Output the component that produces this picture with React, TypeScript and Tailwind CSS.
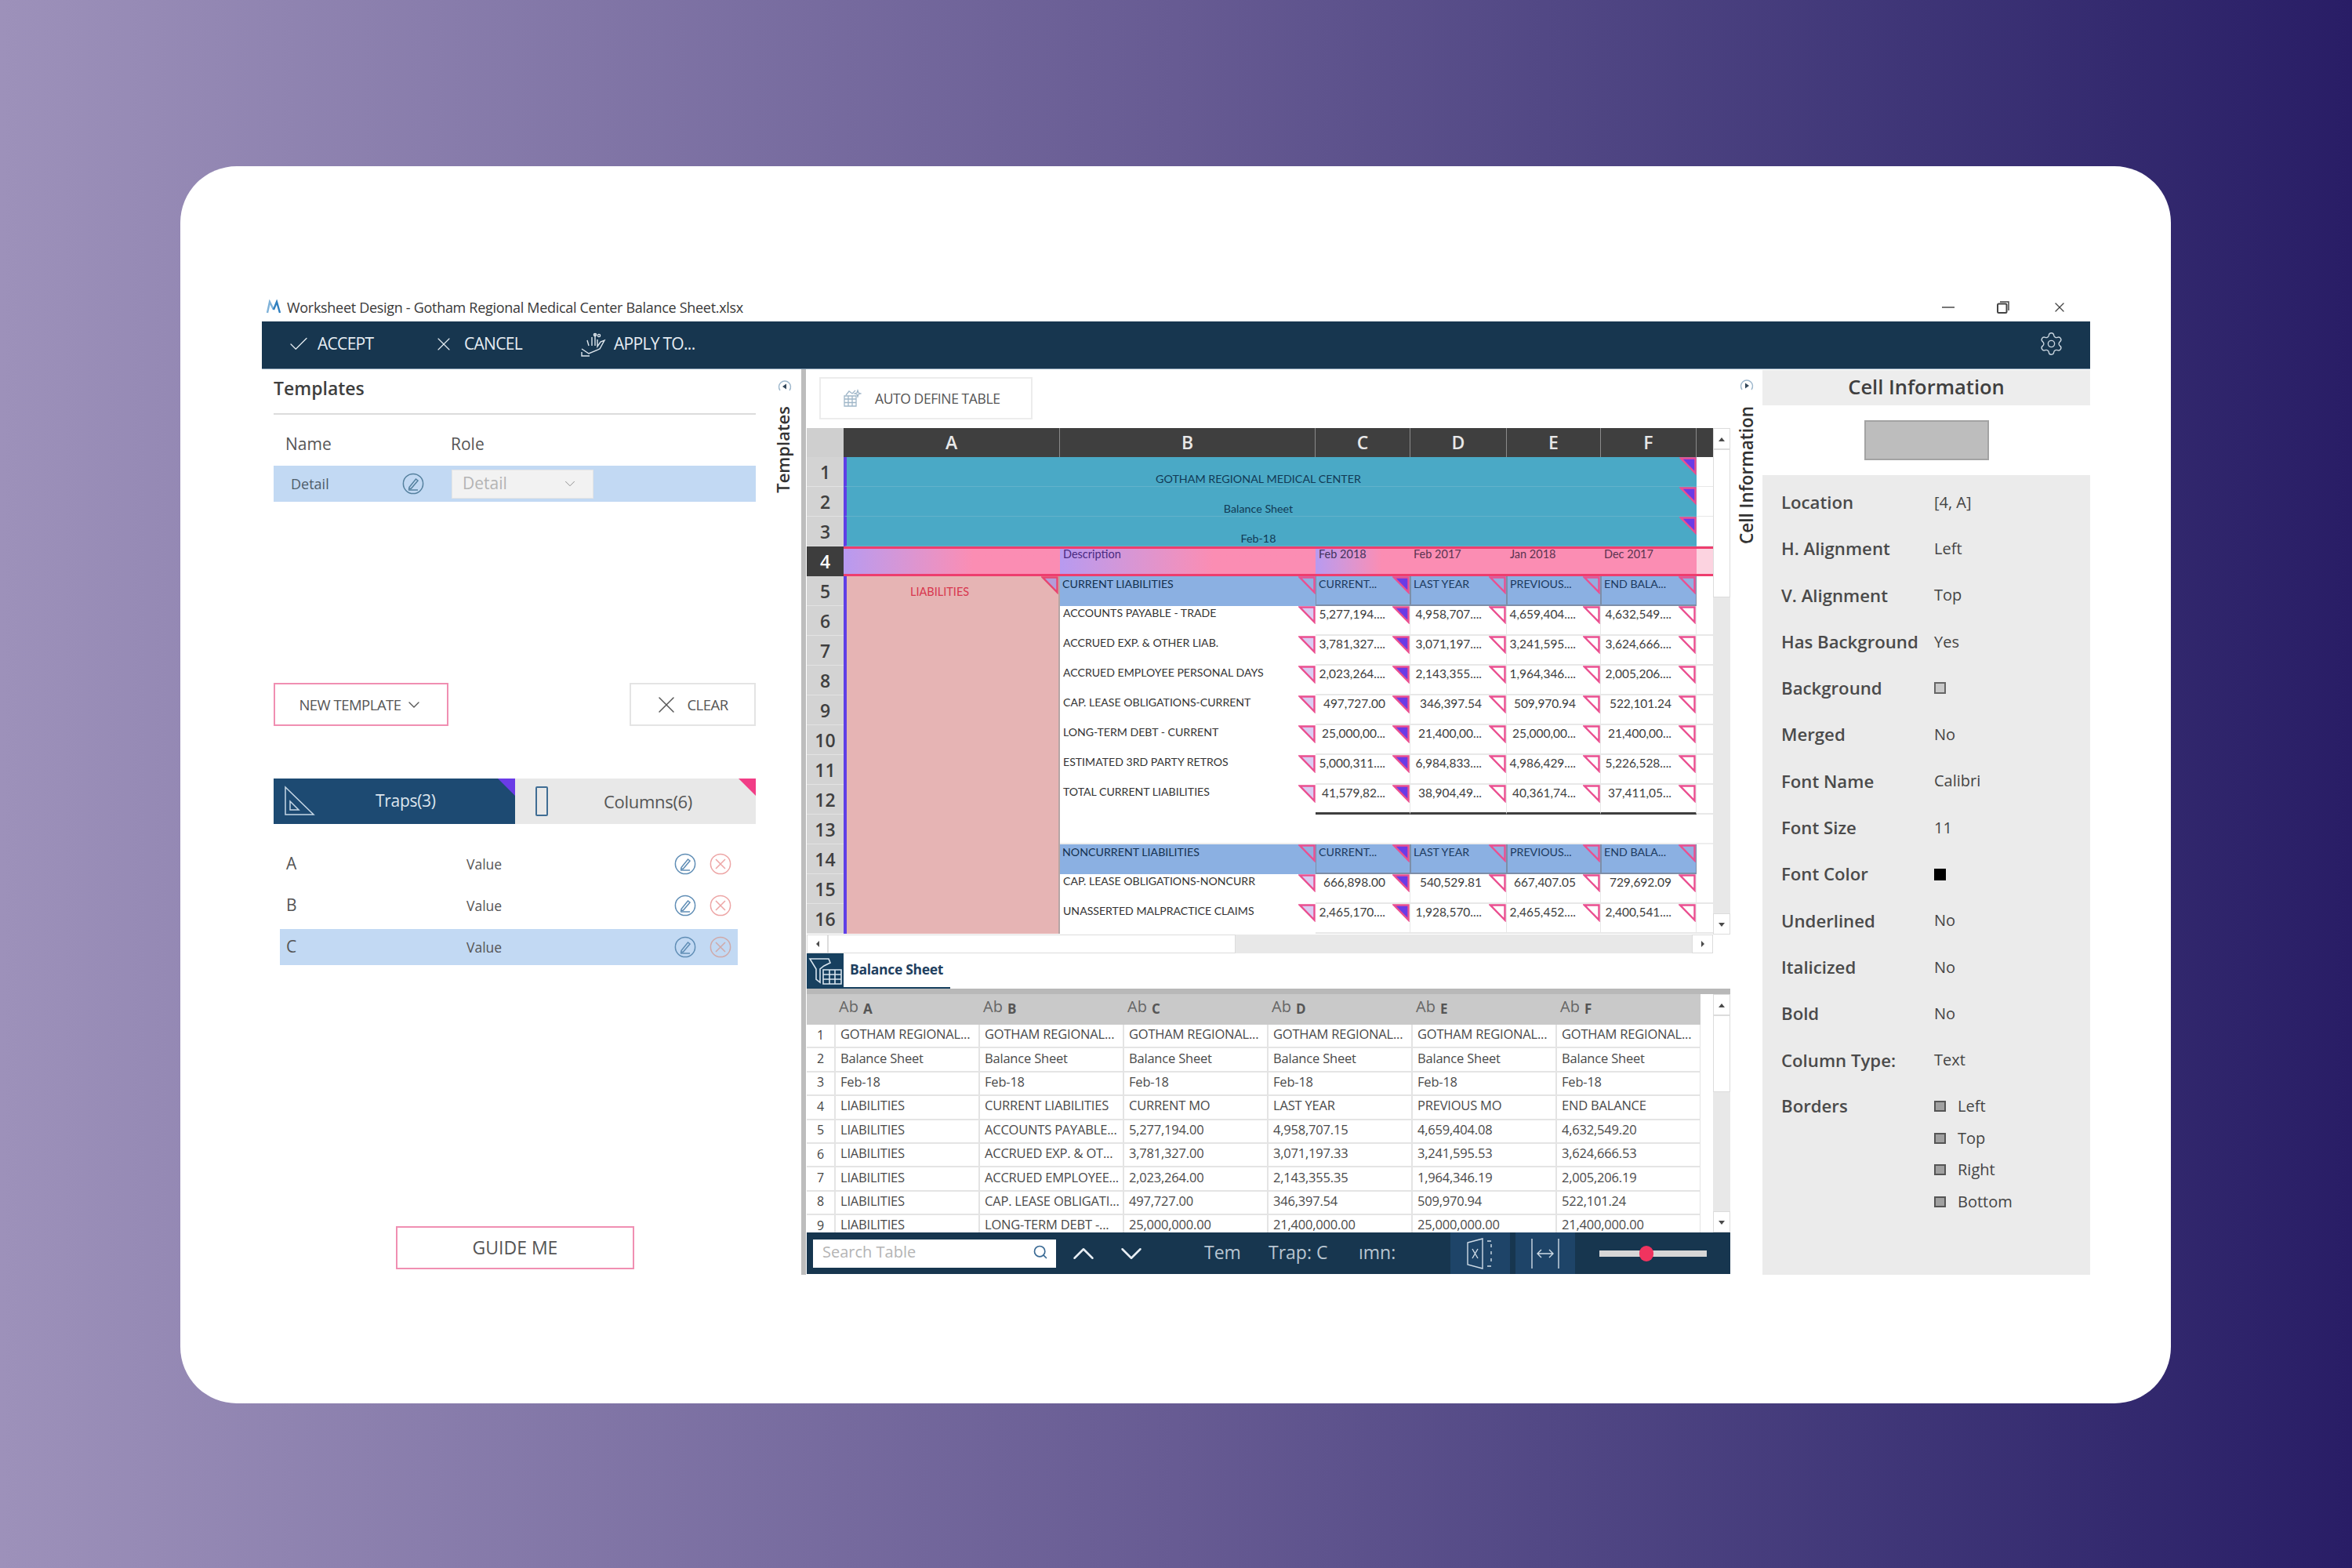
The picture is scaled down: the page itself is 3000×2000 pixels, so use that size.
import React from "react";
import { Settings, Search, ChevronUp, ChevronDown, Check, X } from "lucide-react";

const OPEN = "font-['Open_Sans',sans-serif]";

function Tri({ fill, stroke = "#ea4f90" }: { fill: string; stroke?: string }) {
  return (
    <svg width="22" height="23" viewBox="0 0 22 23" className="absolute top-0 right-0">
      <polygon points="2,1.5 20.5,1.5 20.5,20.5" fill={fill} stroke={stroke} strokeWidth="2.4" />
    </svg>
  );
}

function PencilCircle({ color = "#5f8db5" }: { color?: string }) {
  return (
    <svg width="28" height="28" viewBox="0 0 28 28" fill="none" stroke={color} strokeWidth="1.5">
      <circle cx="14" cy="14" r="12.6" />
      <path d="M9 18.5 L17.5 8 L20 10 L11.5 20 L8.6 20.8 Z" />
      <path d="M8 22 H20" />
    </svg>
  );
}

function XCircle({ color = "#eda5a5" }: { color?: string }) {
  return (
    <svg width="28" height="28" viewBox="0 0 28 28" fill="none" stroke={color} strokeWidth="1.5">
      <circle cx="14" cy="14" r="12.6" />
      <path d="M8 8 L20 20 M20 8 L8 20" />
    </svg>
  );
}

function CollapseIcon({ dir }: { dir: "left" | "right" }) {
  return (
    <svg width="18" height="18" viewBox="0 0 18 18" fill="none">
      <path d="M3 14 A 7.5 7.5 0 1 1 15 14" stroke="#9db7cc" strokeWidth="1.4" />
      <path d={dir === "left" ? "M11 5.5 V12.5 L6 9 Z" : "M7 5.5 V12.5 L12 9 Z"} fill="#33475a" />
    </svg>
  );
}

function HandIcon() {
  return (
    <svg width="36" height="36" viewBox="0 0 36 36" fill="none" stroke="#dfe7ee" strokeWidth="1.4">
      <path d="M4 24 L13 30 L27 24 L33 13 L28 15 L24 21 L24 12 M21 20 V5 M17 20 V9 M13 20 L11 13 M4 28 V33 H14" />
      <circle cx="21" cy="6" r="1.6" />
      <circle cx="26" cy="7" r="1.6" />
    </svg>
  );
}

function TrapIcon() {
  return (
    <svg width="42" height="42" viewBox="0 0 42 42" fill="none" stroke="#c6d7e6" strokeWidth="1.5">
      <path d="M3 3 V38 H39 Z" />
      <path d="M9 21 V32 H20 Z" />
    </svg>
  );
}

function FilterTableIcon() {
  return (
    <svg width="44" height="40" viewBox="0 0 44 40" fill="none" stroke="#d8e4ee" strokeWidth="1.6">
      <path d="M2 4 H26 L28 9 L20 13 L15 17 V34 L10 30 V17 Z" />
      <path d="M19 18 H42 V36 H19 Z M19 24 H42 M19 30 H42 M27 18 V36 M34 18 V36" />
    </svg>
  );
}

function AutoIcon() {
  return (
    <svg width="24" height="24" viewBox="0 0 24 24" fill="none" stroke="#9fb6c8" strokeWidth="1.3">
      <path d="M2 9 H17 V22 H2 Z M2 13 H17 M2 17.5 H17 M7 9 V22 M12 9 V22" />
      <path d="M4 8 L8 3 L12 6 L16 2" />
      <path d="M19 2 L20 5 L23 6 L20 7 L19 10 L18 7 L15 6 L18 5 Z" />
    </svg>
  );
}

function ExcelIcon() {
  return (
    <svg width="38" height="42" viewBox="0 0 38 42" fill="none" stroke="#cfdbe6" strokeWidth="1.4">
      <path d="M3 7 L22 2 V40 L3 35 Z" />
      <path d="M9 15 L16 27 M16 15 L9 27" />
      <path d="M28 5 H33 M33 9 V13 M33 18 V22 M33 27 V31 M28 37 H33" />
    </svg>
  );
}

function FitIcon() {
  return (
    <svg width="38" height="42" viewBox="0 0 38 42" fill="none" stroke="#cfdbe6" strokeWidth="1.4">
      <path d="M2 2 V40 M36 2 V40" />
      <path d="M9 21 H29 M14 16 L9 21 L14 26 M24 16 L29 21 L24 26" />
    </svg>
  );
}

function Logo() {
  return (
    <svg width="22" height="20" viewBox="0 0 22 20" fill="none" strokeWidth="2.4">
      <path d="M3 17 L6 3 L11 13" stroke="#7fb2d9" />
      <path d="M11 13 L15 3 L19 17" stroke="#2f7fbf" />
    </svg>
  );
}

function Restore() {
  return (
    <svg width="16" height="16" viewBox="0 0 16 16" fill="none" stroke="#444" strokeWidth="2">
      <rect x="1" y="3.5" width="11.5" height="11.5" rx="1.5" />
      <path d="M4 1 H15 V12" strokeWidth="1.5" />
    </svg>
  );
}

function Arrow({ dir }: { dir: "up" | "down" | "left" | "right" }) {
  const d = {
    up: "M2 9 L6 4 L10 9 Z",
    down: "M2 4 L6 9 L10 4 Z",
    left: "M8 2 L4 6 L8 10 Z",
    right: "M4 2 L8 6 L4 10 Z",
  }[dir];
  return (
    <svg width="12" height="12" viewBox="0 0 12 12">
      <path d={d} fill="#4a4a4a" />
    </svg>
  );
}

const W = ["w-[276px]", "w-[326px]", "w-[121px]", "w-[123px]", "w-[120px]", "w-[122px]"];
const LETTERS = ["A", "B", "C", "D", "E", "F"];
const BLUEHEAD = ["CURRENT...", "LAST YEAR", "PREVIOUS...", "END BALA..."];

const DATA: [number, string, string[]][] = [
  [6, "ACCOUNTS PAYABLE - TRADE", ["5,277,194....", "4,958,707....", "4,659,404....", "4,632,549...."]],
  [7, "ACCRUED EXP. & OTHER LIAB.", ["3,781,327....", "3,071,197....", "3,241,595....", "3,624,666...."]],
  [8, "ACCRUED EMPLOYEE PERSONAL DAYS", ["2,023,264....", "2,143,355....", "1,964,346....", "2,005,206...."]],
  [9, "CAP. LEASE OBLIGATIONS-CURRENT", ["497,727.00", "346,397.54", "509,970.94", "522,101.24"]],
  [10, "LONG-TERM DEBT - CURRENT", ["25,000,00...", "21,400,00...", "25,000,00...", "21,400,00..."]],
  [11, "ESTIMATED 3RD PARTY RETROS", ["5,000,311....", "6,984,833....", "4,986,429....", "5,226,528...."]],
  [12, "TOTAL CURRENT LIABILITIES", ["41,579,82...", "38,904,49...", "40,361,74...", "37,411,05..."]],
];
const DATA2: [number, string, string[]][] = [
  [15, "CAP. LEASE OBLIGATIONS-NONCURR", ["666,898.00", "540,529.81", "667,407.05", "729,692.09"]],
  [16, "UNASSERTED MALPRACTICE CLAIMS", ["2,465,170....", "1,928,570....", "2,465,452....", "2,400,541...."]],
];

function RowNum({ n, active }: { n: number; active?: boolean }) {
  return (
    <div
      className={
        "w-[47px] h-full shrink-0 flex items-center justify-center text-[23px] " +
        OPEN +
        (active
          ? " bg-[#3d3d3d] text-white font-semibold"
          : " bg-[#d3d3d3] text-[#3f3f3f] font-semibold pt-[2px] border-b border-[#e2e2e2]")
      }
    >
      {n}
    </div>
  );
}

function PinkA({ first }: { first?: boolean }) {
  return (
    <div className="relative w-[276px] h-full shrink-0 bg-[#e6b4b4] border-l-[4px] border-[#5f3fe6] border-r-2 border-r-[#b5a5a5]">
      {first && (
        <>
          <div className="absolute left-[81px] top-[10px] text-[14.5px] leading-[20px] text-[#d8374f]">LIABILITIES</div>
          <Tri fill="#b49cd8" stroke="#e8456f" />
        </>
      )}
    </div>
  );
}

function DataRow({ n, label, vals, thick }: { n: number; label: string; vals: string[]; thick?: boolean }) {
  return (
    <div className="flex h-[38px]">
      <RowNum n={n} />
      <PinkA />
      <div className="relative w-[326px] h-full shrink-0 pl-[4px] text-[14.1px] leading-[18px] text-[#333] whitespace-nowrap">
        {label}
        <Tri fill="#d9ccf2" />
      </div>
      {vals.map((v, i) => (
        <div
          key={i}
          className={
            "relative h-full shrink-0 text-right pr-[31px] text-[15.5px] leading-[20px] text-[#3d3d3d] whitespace-nowrap border-r border-[#e8e8e8] " +
            W[i + 2] +
            (thick ? " border-b-[3px] border-b-[#3f3f3f]" : " border-b-2 border-b-[#e8e8e8]")
          }
        >
          {v}
          <Tri fill={i === 0 ? "#6a3be6" : "#ffffff"} />
        </div>
      ))}
      <div className="w-[21px] h-full shrink-0 border-b-2 border-[#e8e8e8]" />
    </div>
  );
}

function BlueRow({ n, first, label }: { n: number; first?: boolean; label: string }) {
  return (
    <div className="flex h-[38px]">
      <RowNum n={n} />
      <PinkA first={first} />
      <div className="relative w-[326px] h-full shrink-0 bg-[#8bb0e2] pl-[3px] text-[14.2px] leading-[20px] text-[#14304f] whitespace-nowrap">
        {label}
        <Tri fill="#93aee0" />
      </div>
      {BLUEHEAD.map((v, i) => (
        <div
          key={v}
          className={"relative h-full shrink-0 bg-[#8bb0e2] border-l border-r border-b-2 border-[#7d8ea8] pl-[3px] text-[14.2px] leading-[20px] text-[#1c3a5e] whitespace-nowrap " + W[i + 2]}
        >
          {v}
          <Tri fill={i === 0 ? "#6a3be6" : "#93aee0"} />
        </div>
      ))}
      <div className="w-[21px] h-full shrink-0" />
    </div>
  );
}

function TealRow({ n, text }: { n: number; text: string }) {
  return (
    <div className="flex h-[38px]">
      <RowNum n={n} />
      <div className="relative w-[1088px] h-full shrink-0 bg-[#4aa9c6] border-l-[4px] border-[#5f3fe6] border-b border-b-[#62b2cb] flex items-end justify-center pr-[34px] text-[14.3px] leading-[18px] text-[#123a55]">
        {text}
        <Tri fill="#6a3be6" />
      </div>
      <div className="w-[21px] h-full shrink-0 border-b border-[#e8e8e8]" />
    </div>
  );
}

function Sheet() {
  return (
    <div className={"w-[1156px] shrink-0 font-['Lato',sans-serif]"}>
      <div className="flex h-[37px]">
        <div className="w-[47px] bg-[#cfcfcf] shrink-0" />
        {LETTERS.map((l, i) => (
          <div key={l} className={"h-full shrink-0 bg-[#3f3f3f] border-r border-[#8a8a8a] flex items-center justify-center text-[23px] font-semibold text-[#e8e8e8] " + OPEN + " " + W[i]}>
            {l}
          </div>
        ))}
        <div className="w-[21px] bg-[#3f3f3f] shrink-0" />
      </div>
      <TealRow n={1} text="GOTHAM REGIONAL MEDICAL CENTER" />
      <TealRow n={2} text="Balance Sheet" />
      <TealRow n={3} text="Feb-18" />
      <div className="flex h-[38px]">
        <RowNum n={4} active />
        <div className="w-[1109px] shrink-0 flex border-y-[3px] border-[#ee3d6e]">
          <div className="w-[276px] bg-linear-to-r from-[#b79af0] to-[#fb8db3] to-60%" />
          <div className="w-[326px] bg-linear-to-r from-[#b79af0] to-[#fb8db3] to-60% pl-[4px] text-[14.5px] leading-[14px] text-[#4a2a80]">Description</div>
          <div className="w-[121px] bg-linear-to-r from-[#b79af0] to-[#fb8db3] to-70% pl-[4px] text-[14.5px] leading-[14px] text-[#43335c]">Feb 2018</div>
          <div className="w-[123px] bg-[#fb8db3] pl-[4px] text-[14.5px] leading-[14px] text-[#5a3350]">Feb 2017</div>
          <div className="w-[120px] bg-[#fb8db3] pl-[4px] text-[14.5px] leading-[14px] text-[#5a3350]">Jan 2018</div>
          <div className="w-[122px] bg-[#fb8db3] pl-[4px] text-[14.5px] leading-[14px] text-[#5a3350]">Dec 2017</div>
          <div className="w-[21px] bg-[#fcd3e0]" />
        </div>
      </div>
      <BlueRow n={5} first label="CURRENT LIABILITIES" />
      {DATA.map(([n, l, v]) => (
        <DataRow key={n} n={n} label={l} vals={v} thick={n === 12} />
      ))}
      <div className="flex h-[38px]">
        <RowNum n={13} />
        <PinkA />
        <div className="flex-1 border-b-2 border-[#eeeeee]" />
      </div>
      <BlueRow n={14} label="NONCURRENT LIABILITIES" />
      {DATA2.map(([n, l, v]) => (
        <DataRow key={n} n={n} label={l} vals={v} />
      ))}
    </div>
  );
}

function VScroll({ thumb, className }: { thumb: string; className: string }) {
  return (
    <div className={"w-[22px] shrink-0 flex flex-col bg-[#e8e8e8] " + className}>
      <div className="h-[27px] shrink-0 bg-white border border-[#dcdcdc] flex items-center justify-center">
        <Arrow dir="up" />
      </div>
      <div className={"shrink-0 bg-white border border-[#dcdcdc] " + thumb} />
      <div className="flex-1" />
      <div className="h-[27px] shrink-0 bg-white border border-[#dcdcdc] flex items-center justify-center">
        <Arrow dir="down" />
      </div>
    </div>
  );
}

const LOWER: string[][] = [
  ["GOTHAM REGIONAL...", "GOTHAM REGIONAL...", "GOTHAM REGIONAL...", "GOTHAM REGIONAL...", "GOTHAM REGIONAL...", "GOTHAM REGIONAL..."],
  ["Balance Sheet", "Balance Sheet", "Balance Sheet", "Balance Sheet", "Balance Sheet", "Balance Sheet"],
  ["Feb-18", "Feb-18", "Feb-18", "Feb-18", "Feb-18", "Feb-18"],
  ["LIABILITIES", "CURRENT LIABILITIES", "CURRENT MO", "LAST YEAR", "PREVIOUS MO", "END BALANCE"],
  ["LIABILITIES", "ACCOUNTS PAYABLE...", "5,277,194.00", "4,958,707.15", "4,659,404.08", "4,632,549.20"],
  ["LIABILITIES", "ACCRUED EXP. & OT...", "3,781,327.00", "3,071,197.33", "3,241,595.53", "3,624,666.53"],
  ["LIABILITIES", "ACCRUED EMPLOYEE...", "2,023,264.00", "2,143,355.35", "1,964,346.19", "2,005,206.19"],
  ["LIABILITIES", "CAP. LEASE OBLIGATI...", "497,727.00", "346,397.54", "509,970.94", "522,101.24"],
  ["LIABILITIES", "LONG-TERM DEBT -...", "25,000,000.00", "21,400,000.00", "25,000,000.00", "21,400,000.00"],
];

function LowerTable() {
  return (
    <div className="flex flex-col h-[311px] shrink-0 overflow-hidden">
      <div className="h-[7px] bg-[#b8b8b8] shrink-0 w-[1178px]" />
      <div className="flex flex-1 min-h-0">
        <div className="w-[1140px] shrink-0 overflow-hidden">
          <div className="flex h-[39px] bg-[#c9c9c9]">
            <div className="w-[37px] shrink-0" />
            {LETTERS.map((l) => (
              <div key={l} className="w-[184px] shrink-0 pl-[4px] pb-[2px] flex items-center gap-[6px] text-[#666]">
                <span className="text-[20px] leading-none mb-[5px]">Ab</span>
                <span className="text-[17px] leading-none font-bold text-[#555]">{l}</span>
              </div>
            ))}
          </div>
          {LOWER.map((r, i) => (
            <div key={i} className="flex h-[30.4px] border-b-2 border-[#e4e4e4]">
              <div className="w-[37px] shrink-0 pb-[3px] flex items-center justify-center text-[16px] text-[#444] border-r-2 border-[#e4e4e4]">{i + 1}</div>
              {r.map((c, j) => (
                <div key={j} className="w-[184px] shrink-0 pl-[6px] pb-[3px] flex items-center text-[16.5px] tracking-[-0.2px] text-[#4a4a4a] whitespace-nowrap border-r-2 border-[#e4e4e4]">
                  {c}
                </div>
              ))}
            </div>
          ))}
        </div>
        <div className="w-[16px] shrink-0" />
        <VScroll thumb="h-[98px]" className="h-[304px]" />
      </div>
    </div>
  );
}

const INFO: [string, React.ReactNode][] = [
  ["Location", "[4, A]"],
  ["H. Alignment", "Left"],
  ["V. Alignment", "Top"],
  ["Has Background", "Yes"],
  ["Background", <div className="w-[15px] h-[15px] bg-[#c9c9c9] border-2 border-[#666]" />],
  ["Merged", "No"],
  ["Font Name", "Calibri"],
  ["Font Size", "11"],
  ["Font Color", <div className="w-[15px] h-[15px] bg-black" />],
  ["Underlined", "No"],
  ["Italicized", "No"],
  ["Bold", "No"],
  ["Column Type:", "Text"],
];

export default function App() {
  return (
    <div className={"w-[3000px] h-[2000px] pt-[212px] pl-[230px] bg-linear-to-r from-[#9d91ba] via-[#675b93] via-50% to-[#291d66] " + OPEN}>
      <div className="w-[2539px] h-[1578px] bg-white rounded-[72px] pl-[104px] pt-[166px]">
        <div className="w-[2332px] flex flex-col">
          {/* Title bar */}
          <div className="h-[32px] pb-[4px] flex items-center text-[#3a3a3a]">
            <div className="w-[32px] pl-[4px]">
              <Logo />
            </div>
            <span className="text-[18px] tracking-[-0.3px] whitespace-nowrap">Worksheet Design - Gotham Regional Medical Center Balance Sheet.xlsx</span>
            <div className="ml-auto flex items-center pr-[29px] gap-[54px] text-[#444]">
              <div className="w-[16px] h-[2px] bg-[#777]" />
              <Restore />
              <X size={20} strokeWidth={1.5} />
            </div>
          </div>
          {/* Toolbar */}
          <div className="h-[61px] pb-[3px] bg-[#17364f] flex items-center text-[#e6edf3] text-[21px] tracking-[-0.7px] border-b border-[#7f97ad]">
            <Check size={30} strokeWidth={1} className="ml-[32px]" />
            <span className="ml-[9px] w-[147px]">ACCEPT</span>
            <X size={28} strokeWidth={1} />
            <span className="ml-[12px] w-[146px]">CANCEL</span>
            <HandIcon />
            <span className="ml-[9px]">APPLY TO...</span>
            <Settings size={33} strokeWidth={1} className="ml-auto mr-[33px] text-[#c9d5df]" />
          </div>
          {/* Main */}
          <div className="h-[1155px] flex">
            {/* Left panel */}
            <div className="w-[688px] shrink-0 flex">
              <div className="w-[630px] shrink-0 pl-[15px] flex flex-col">
                <div className="h-[58px] shrink-0 pb-[8px] flex items-center border-b-2 border-[#dcdcdc] text-[23px] font-semibold text-[#3f3f3f]">Templates</div>
                <div className="h-[65px] shrink-0 pt-[11px] flex items-center text-[21px] text-[#555]">
                  <span className="w-[226px] pl-[15px]">Name</span>
                  <span>Role</span>
                </div>
                <div className="h-[46px] shrink-0 bg-[#c2d9f3] flex items-center">
                  <span className="w-[164px] pl-[22px] text-[18px] text-[#4f5d6a]">Detail</span>
                  <PencilCircle color="#55819f" />
                  <div className="ml-[35px] w-[181px] h-[37px] bg-[#f2f2f2] border border-[#e4e4e4] flex items-center justify-between pl-[13px] pr-[18px] text-[21px] text-[#b4b4b4]">
                    Detail
                    <ChevronDown size={22} strokeWidth={1} className="text-[#888]" />
                  </div>
                </div>
                <div className="mt-[231px] h-[55px] shrink-0 flex justify-between">
                  <div className="w-[223px] border-2 border-[#f08fb2] flex items-center justify-center gap-[4px] text-[18.5px] tracking-[-0.5px] text-[#555]">
                    NEW TEMPLATE
                    <ChevronDown size={24} strokeWidth={1.4} />
                  </div>
                  <div className="w-[161px] border-2 border-[#e4e4e4] flex items-center justify-center gap-[8px] pr-[6px] text-[18.5px] tracking-[-0.5px] text-[#555]">
                    <X size={36} strokeWidth={1} />
                    CLEAR
                  </div>
                </div>
                <div className="mt-[67px] h-[58px] shrink-0 flex">
                  <div className="relative w-[308px] bg-[#1d4a72] flex items-center text-[#dde6ee] text-[21px] tracking-[-0.3px]">
                    <div className="ml-[12px] w-[118px]">
                      <TrapIcon />
                    </div>
                    <span>Traps(3)</span>
                    <svg width="22" height="22" viewBox="0 0 22 22" className="absolute top-0 right-0">
                      <polygon points="0,0 22,0 22,22" fill="#6a3be6" />
                    </svg>
                  </div>
                  <div className="relative w-[307px] bg-[#e8e8e8] flex items-center text-[#555] text-[22px] tracking-[-0.3px]">
                    <div className="ml-[26px] w-[16px] h-[38px] border-2 border-[#3f6d94] rounded-[2px]" />
                    <span className="ml-[71px]">Columns(6)</span>
                    <svg width="22" height="22" viewBox="0 0 22 22" className="absolute top-0 right-0">
                      <polygon points="0,0 22,0 22,22" fill="#f13d86" />
                    </svg>
                  </div>
                </div>
                <div className="mt-[28px] ml-[8px] w-[584px] flex flex-col gap-[7px]">
                  {["A", "B", "C"].map((l) => (
                    <div key={l} className={"h-[46px] flex items-center" + (l === "C" ? " bg-[#c2d9f3]" : "")}>
                      <span className="w-[238px] pl-[8px] text-[21px] text-[#555]">{l}</span>
                      <span className="w-[265px] text-[17.5px] text-[#555]">Value</span>
                      <PencilCircle color="#5f8db5" />
                      <div className="ml-[17px]">
                        <XCircle color={l === "C" ? "#cfa9a9" : "#eda5a5"} />
                      </div>
                    </div>
                  ))}
                </div>
                <div className="mt-[333px] ml-[156px] w-[304px] h-[55px] shrink-0 border-2 border-[#f08fb2] flex items-center justify-center text-[23px] text-[#555]">GUIDE ME</div>
              </div>
              <div className="w-[58px] shrink-0 flex flex-col items-center pt-[13px] pl-[15px]">
                <CollapseIcon dir="left" />
                <span className="mt-[16px] mr-[5px] [writing-mode:vertical-rl] rotate-180 text-[22px] font-semibold text-[#333] leading-none">Templates</span>
              </div>
            </div>
            <div className="w-[6px] shrink-0 bg-[#bdbdbd]" />
            {/* Center */}
            <div className="w-[1179px] shrink-0 flex flex-col">
              <div className="h-[75px] shrink-0 pl-[17px] pt-[10px]">
                <div className="w-[272px] h-[54px] border-2 border-[#ececec] flex items-center pl-[28px] gap-[17px] text-[17.5px] tracking-[-0.4px] text-[#555]">
                  <AutoIcon />
                  AUTO DEFINE TABLE
                </div>
              </div>
              <div className="ml-[1px] h-[646px] shrink-0 flex">
                <Sheet />
                <VScroll thumb="h-[189px]" className="h-[646px]" />
              </div>
              <div className="ml-[1px] h-[24px] shrink-0 flex w-[1156px] bg-[#e8e8e8]">
                <div className="w-[27px] bg-white border border-[#dcdcdc] flex items-center justify-center">
                  <Arrow dir="left" />
                </div>
                <div className="w-[520px] bg-white border border-[#dcdcdc]" />
                <div className="flex-1" />
                <div className="w-[27px] bg-white border border-[#dcdcdc] flex items-center justify-center">
                  <Arrow dir="right" />
                </div>
              </div>
              <div className="ml-[1px] h-[45px] shrink-0 flex">
                <div className="w-[47px] bg-[#17405f] flex items-center justify-center">
                  <FilterTableIcon />
                </div>
                <div className="w-[136px] border-b-2 border-[#17405f] pl-[8px] pb-[3px] flex items-center text-[17.5px] font-bold tracking-[-0.3px] text-[#1f3f5f]">Balance Sheet</div>
              </div>
              <div className="ml-[1px]">
                <LowerTable />
              </div>
              <div className="ml-[1px] w-[1178px] h-[53px] shrink-0 bg-[#17364f] flex items-center text-[23px] text-[#b9c6d2]">
                <div className="ml-[8px] w-[310px] h-[36px] pb-[3px] bg-white flex items-center justify-between pl-[12px] pr-[10px] text-[20px] text-[#b4b4b4]">
                  Search Table
                  <Search size={20} strokeWidth={2} className="text-[#3a6a94]" />
                </div>
                <ChevronUp size={46} strokeWidth={1.3} className="ml-[12px] text-[#e8eef4]" />
                <ChevronDown size={46} strokeWidth={1.3} className="ml-[15px] text-[#e8eef4]" />
                <span className="ml-[70px] w-[82px] pb-[2px]">Tem</span>
                <span className="w-[115px] pb-[2px]">Trap: C</span>
                <span className="w-[117px] pb-[2px]">ımn:</span>
                <div className="w-[76px] h-full bg-[#1e4468] flex items-center justify-center">
                  <ExcelIcon />
                </div>
                <div className="ml-[7px] w-[76px] h-full bg-[#1e4468] flex items-center justify-center">
                  <FitIcon />
                </div>
                <div className="relative ml-[31px] w-[137px] h-[8px] bg-[#d6d6d6]">
                  <div className="absolute left-[51px] top-[-6px] w-[18px] h-[20px] rounded-full bg-[#f0345f]" />
                </div>
              </div>
            </div>
            {/* Right */}
            <div className="w-[41px] shrink-0 flex flex-col items-center pt-[12px]">
              <CollapseIcon dir="right" />
              <span className="mt-[17px] ml-[2px] [writing-mode:vertical-rl] rotate-180 text-[22.5px] font-semibold text-[#333] leading-none">Cell Information</span>
            </div>
            <div className="w-[418px] shrink-0 flex flex-col">
              <div className="h-[45px] shrink-0 mt-[1px] pb-[3px] bg-[#ededed] flex items-center justify-center text-[25.5px] font-semibold text-[#3f3f3f]">Cell Information</div>
              <div className="h-[89px] shrink-0 flex items-center justify-center">
                <div className="w-[159px] h-[51px] bg-[#bdbdbd] border-2 border-[#a3a3a3]" />
              </div>
              <div className="flex-1 bg-[#ebebeb] pl-[24px] pt-[5px] text-[#444]">
                {INFO.map(([k, v]) => (
                  <div key={k} className="h-[59.3px] flex items-center">
                    <span className="w-[195px] text-[22.2px] font-semibold text-[#4a4a4a] whitespace-nowrap">{k}</span>
                    <span className="text-[20px] font-medium text-[#444]">{v}</span>
                  </div>
                ))}
                <div className="flex mt-[9px]">
                  <span className="w-[195px] h-[40px] flex items-center text-[22.2px] font-semibold text-[#4a4a4a]">Borders</span>
                  <div className="flex flex-col">
                    {["Left", "Top", "Right", "Bottom"].map((b) => (
                      <div key={b} className="h-[40.5px] flex items-center gap-[15px] text-[20px] font-medium text-[#444]">
                        <div className="w-[15px] h-[14px] bg-[#a0a0a0] border-2 border-[#555]" />
                        {b}
                      </div>
                    ))}
                  </div>
                </div>
              </div>
            </div>
          </div>
        </div>
      </div>
    </div>
  );
}
